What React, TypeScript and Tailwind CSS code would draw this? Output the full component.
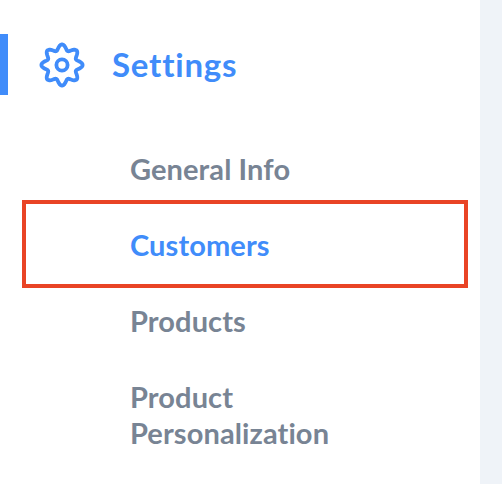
const items = ["General Info", "Customers", "Products", "Product Personalization"];

// wavy outline of the gear, 8 rounded lobes
const gearPoints = Array.from({ length: 160 }, (_, i) => {
    const t = (i / 160) * Math.PI * 2;
    const r = 17.8 + 2.8 * Math.cos(8 * t);
    const x = 24 + r * Math.sin(t);
    const y = 24 - r * Math.cos(t);
    return `${x.toFixed(2)},${y.toFixed(2)}`;
}).join(" ");

function Gear() {
    return (
        <svg viewBox="0 0 48 48" className="size-[48px] shrink-0" fill="none" stroke="currentColor" strokeWidth="3.8">
            <polygon points={gearPoints} strokeLinejoin="round" />
            <circle cx="24" cy="24" r="5.6" />
        </svg>
    );
}

export default function App() {
    return (
        <div className="flex h-[484px] w-[502px] overflow-hidden bg-[#eff3f8] font-['Lato',sans-serif]">
            <aside className="h-full w-[480px] bg-white pt-[34px]">
                <div className="flex h-[61px] items-center border-l-[8px] border-[#408cfa] pl-[30px] text-[#408cfa]">
                    <Gear />
                    <span className="ml-[26px] text-[33px] font-bold tracking-[0.8px]">Settings</span>
                </div>
                <nav className="relative mt-[56px] flex flex-col pl-[130px] pr-[110px] text-[29px] font-bold leading-[36px] tracking-[0.1px] text-[#788494]">
                    {items.map((item) => (
                        <a key={item} className={item === "Customers" ? "pb-[40px] text-[#408cfa]" : "pb-[40px]"}>
                            {item}
                        </a>
                    ))}
                    <div className="absolute left-[22px] top-[49px] h-[88px] w-[446px] border-[4px] border-[#e94425]" />
                </nav>
            </aside>
        </div>
    );
}
